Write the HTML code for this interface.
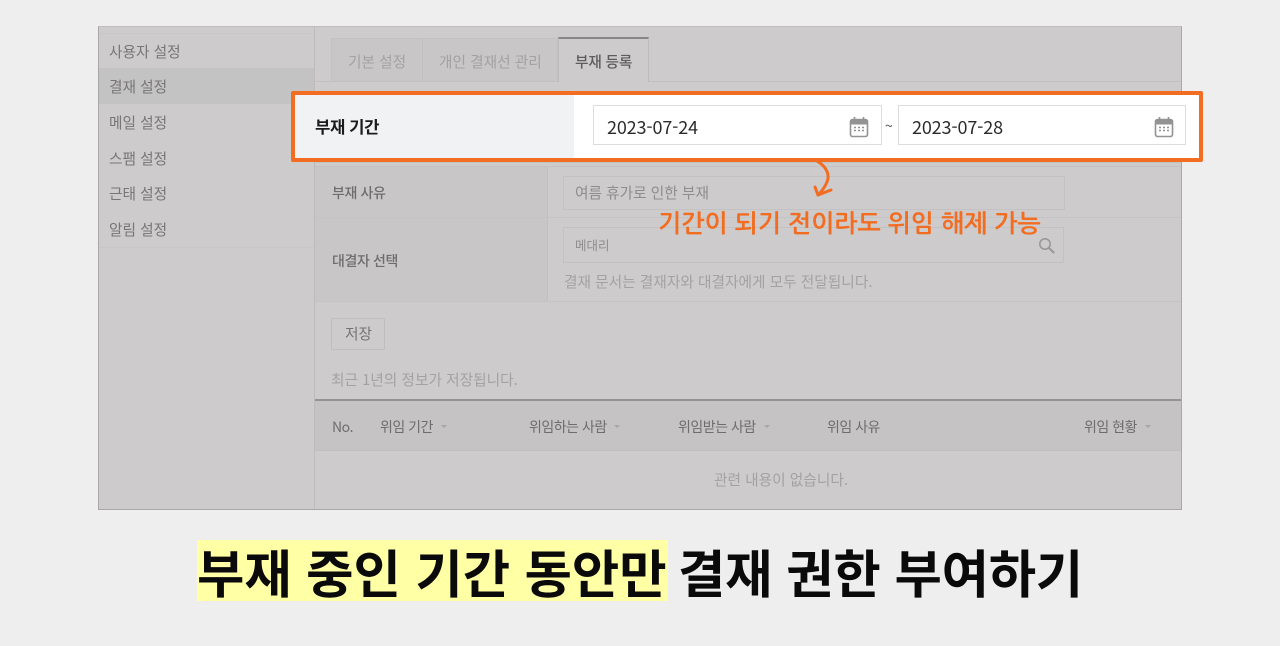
<!DOCTYPE html>
<html lang="ko"><head><meta charset="utf-8"><title>부재 등록</title>
<style>
html,body{margin:0;padding:0;width:1280px;height:646px;overflow:hidden;background:#eeeeee}
body{position:relative;font-family:"Liberation Sans","Noto Sans CJK KR",sans-serif}
.a{position:absolute}
.t{position:absolute;white-space:nowrap;line-height:20px;font-size:14.7px;font-family:"Noto Sans CJK KR",sans-serif}
.nav{left:109px;color:#777575}
.th{color:#6e6c6c;top:417px;font-size:14px;letter-spacing:-.5px}
.h{color:#a3a1a1}
.caret{position:absolute;top:425px;width:0;height:0;border-left:3.5px solid transparent;border-right:3.5px solid transparent;border-top:3.5px solid #a8a6a6}
.date{position:absolute;top:105px;height:38px;background:#fff;border:1px solid #dcdcdc}
.date span{position:absolute;left:13px;top:8px;font-size:18px;line-height:26px;color:#2b2b2b;font-family:"Noto Sans CJK KR",sans-serif;letter-spacing:-.15px}
.date svg{position:absolute;left:255px;top:10px}
</style></head><body>
<div class="a" style="left:98px;top:26px;width:1082px;height:482px;background:#cdcbcb;border:1px solid #a9a8a8;border-top-color:#c0bebe"></div>
<div class="a" style="left:99px;top:33px;width:215px;height:1px;background:#c8c6c6"></div>
<div class="a" style="left:99px;top:68px;width:215px;height:36px;background:#c4c3c3"></div>
<div class="a" style="left:99px;top:247px;width:215px;height:1px;background:#c8c6c6"></div>
<div class="a" style="left:314px;top:27px;width:1px;height:482px;background:#bdbbbb"></div>
<div class="t nav" style="top:42px">사용자 설정</div>
<div class="t nav" style="top:77px">결재 설정</div>
<div class="t nav" style="top:113px">메일 설정</div>
<div class="t nav" style="top:149px">스팸 설정</div>
<div class="t nav" style="top:184px">근태 설정</div>
<div class="t nav" style="top:220px">알림 설정</div>

<div class="a" style="left:315px;top:81px;width:866px;height:1px;background:#c2c0c0"></div>
<div class="a" style="left:331px;top:38px;width:227px;height:43px;background:#c8c6c6;border:1px solid #c3c1c1;border-bottom:0;box-sizing:border-box"></div>
<div class="a" style="left:422px;top:38px;width:1px;height:43px;background:#c1bfbf"></div>
<div class="a" style="left:558px;top:37px;width:91px;height:45px;background:#cdcbcb;border-top:2px solid #878686;border-left:1px solid #bdbbbb;border-right:1px solid #bdbbbb;box-sizing:border-box"></div>
<div class="t" style="left:348px;top:52px;color:#a3a1a1">기본 설정</div>
<div class="t" style="left:439px;top:52px;color:#a3a1a1">개인 결재선 관리</div>
<div class="t" style="left:575px;top:52px;color:#5e5c5c;font-weight:500;letter-spacing:-.2px">부재 등록</div>

<div class="a" style="left:315px;top:162px;width:866px;height:1px;background:#c2c0c0"></div>
<div class="a" style="left:315px;top:166px;width:866px;height:1px;background:#c2c0c0"></div>
<div class="a" style="left:315px;top:167px;width:232px;height:134px;background:#c8c6c6"></div>
<div class="a" style="left:547px;top:167px;width:1px;height:134px;background:#c2c0c0"></div>
<div class="a" style="left:315px;top:217px;width:866px;height:1px;background:#c5c3c3"></div>
<div class="a" style="left:315px;top:301px;width:866px;height:1px;background:#c5c3c3"></div>
<div class="t" style="left:332px;top:183px;color:#6e6c6c;font-size:14px;font-weight:500;letter-spacing:-.4px">부재 사유</div>
<div class="t" style="left:332px;top:251px;color:#6e6c6c;font-size:14px;font-weight:500;letter-spacing:-.4px">대결자 선택</div>
<div class="a" style="left:563px;top:176px;width:500px;height:32px;border:1px solid #c3c1c1;background:#cdcbcb"></div>
<div class="t" style="left:575px;top:183px;color:#8e8c8c">여름 휴가로 인한 부재</div>
<div class="a" style="left:563px;top:227px;width:499px;height:34px;border:1px solid #c3c1c1;background:#cdcbcb"></div>
<div class="t" style="left:575px;top:235px;color:#8e8c8c;font-size:12.5px">메대리</div>
<svg class="a" style="left:1037px;top:236px" width="20" height="20" viewBox="0 0 20 20" fill="none" stroke="#9a9898"><circle cx="8" cy="8" r="5.2" stroke-width="1.6"/><path d="M12 12l5.2 5" stroke-width="2.2"/></svg>
<div class="t h" style="left:564px;top:272px">결재 문서는 결재자와 대결자에게 모두 전달됩니다.</div>

<div class="a" style="left:331px;top:318px;width:52px;height:30px;border:1px solid #bfbdbd;border-radius:2px;background:#cdcbcb"></div>
<div class="t" style="left:345px;top:324px;color:#757373">저장</div>
<div class="t h" style="left:331px;top:370px">최근 1년의 정보가 저장됩니다.</div>

<div class="a" style="left:315px;top:399px;width:866px;height:2px;background:#949393"></div>
<div class="a" style="left:315px;top:401px;width:866px;height:49px;background:#c5c3c3"></div>
<div class="a" style="left:315px;top:450px;width:866px;height:1px;background:#c0bebe"></div>
<div class="t th" style="left:332px">No.</div>
<div class="t th" style="left:380px">위임 기간</div><div class="caret" style="left:441px"></div>
<div class="t th" style="left:529px">위임하는 사람</div><div class="caret" style="left:614px"></div>
<div class="t th" style="left:678px">위임받는 사람</div><div class="caret" style="left:764px"></div>
<div class="t th" style="left:827px">위임 사유</div>
<div class="t th" style="left:1084px">위임 현황</div><div class="caret" style="left:1145px"></div>
<div class="t h" style="left:714px;top:470px">관련 내용이 없습니다.</div>

<div class="a" style="left:291px;top:91px;width:912px;height:71px;box-sizing:border-box;border:4px solid #f26d21;border-radius:2px;background:linear-gradient(90deg,#f0f2f4 0,#f0f2f4 279px,#fff 279px)"></div>
<div class="t" style="left:315px;top:116px;font-size:16.7px;font-weight:700;color:#1c1c1c;letter-spacing:-.4px">부재 기간</div>
<div class="date" style="left:593px;width:287px"><span>2023-07-24</span>
<svg width="20" height="22" viewBox="0 0 20 22" fill="none"><rect x="1.5" y="3.5" width="17" height="17" rx="2" stroke="#939393" stroke-width="1.6"/><path d="M1.5 5.5a2 2 0 0 1 2-2h13a2 2 0 0 1 2 2v3h-17z" fill="#939393"/><path d="M5.5 1v4M14.5 1v4" stroke="#939393" stroke-width="1.6"/><path d="M5 11.5h2M9 11.5h2M13 11.5h2M5 14.5h2M9 14.5h2M13 14.5h2" stroke="#939393" stroke-width="1.6"/></svg></div>
<div class="t" style="left:885px;top:116px;color:#555;font-size:14px">~</div>
<div class="date" style="left:898px;width:286px"><span>2023-07-28</span>
<svg width="20" height="22" viewBox="0 0 20 22" fill="none"><rect x="1.5" y="3.5" width="17" height="17" rx="2" stroke="#939393" stroke-width="1.6"/><path d="M1.5 5.5a2 2 0 0 1 2-2h13a2 2 0 0 1 2 2v3h-17z" fill="#939393"/><path d="M5.5 1v4M14.5 1v4" stroke="#939393" stroke-width="1.6"/><path d="M5 11.5h2M9 11.5h2M13 11.5h2M5 14.5h2M9 14.5h2M13 14.5h2" stroke="#939393" stroke-width="1.6"/></svg></div>

<svg class="a" style="left:805px;top:160px" width="35" height="40" viewBox="0 0 35 40" fill="none" stroke="#f26d21" stroke-width="3" stroke-linecap="round" stroke-linejoin="round"><path d="M12 1C22 7 25 15 22 22C20 27 17 31 13 35"/><path d="M10 27L13 35L26 30"/></svg>
<div class="t" style="left:658px;top:209px;font-size:24.7px;line-height:30px;font-weight:700;color:#f26d21;font-family:NanumGothic,'Noto Sans CJK KR',sans-serif">기간이 되기 전이라도 위임 해제 가능</div>

<div class="a" style="left:197px;top:540px;width:471px;height:61px;background:#ffffa6"></div>
<div class="t" style="left:197px;top:536px;font-size:51.5px;line-height:70px;font-weight:700;color:#0a0a0a">부재 중인 기간 동안만</div>
<div class="t" style="left:678px;top:536px;font-size:51.5px;line-height:70px;font-weight:700;color:#0a0a0a;letter-spacing:-.3px">결재 권한 부여하기</div>
</body></html>
